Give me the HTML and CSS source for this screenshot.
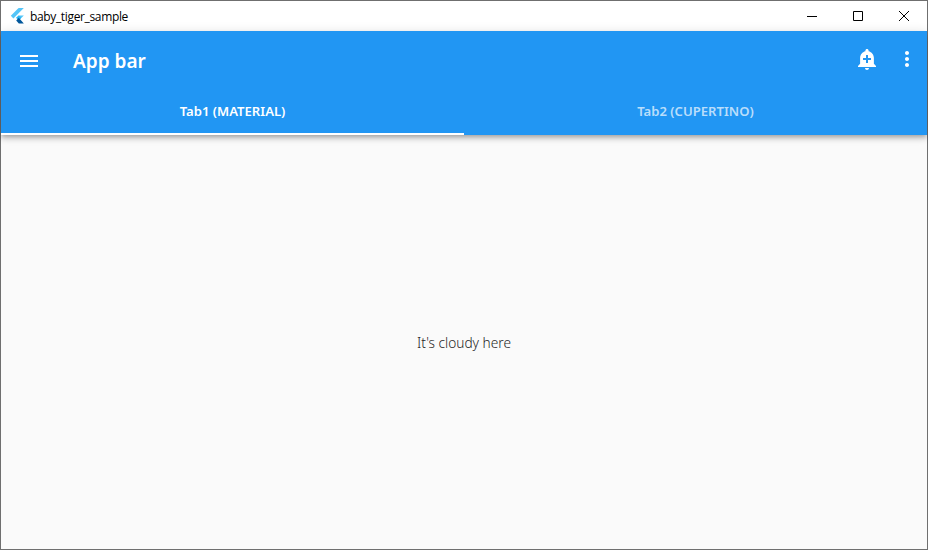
FILE: index.html
```html
<!DOCTYPE html>
<html lang="en">
<head>
    <meta charset="UTF-8">
    <title>baby_tiger_sample</title>
    <link rel="stylesheet" href="styles.css">
</head>
<body>
    <div class="window">
        <div class="titlebar">
            <svg class="flutter-logo" viewBox="0 0 14 16" width="14" height="16">
                <polygon points="8.6,0 13.8,0 3.4,10.4 0.8,7.8" fill="#54c5f8"/>
                <polygon points="8.6,7.4 13.8,7.4 8.8,12.4 6.2,9.8" fill="#54c5f8"/>
                <polygon points="6.2,9.8 8.8,7.4 11.2,9.8 8.8,12.4" fill="#29b6f6"/>
                <polygon points="6.2,12.4 8.8,9.8 13.8,15.6 8.8,15.6" fill="#01579b"/>
            </svg>
            <span class="window-title">baby_tiger_sample</span>
            <div class="window-controls">
                <div class="win-btn">
                    <svg viewBox="0 0 10 10" width="10" height="10"><path d="M0 5.5h10" stroke="#000" fill="none"/></svg>
                </div>
                <div class="win-btn">
                    <svg viewBox="0 0 10 10" width="10" height="10"><path d="M.5.5h9v9h-9z" stroke="#000" fill="none"/></svg>
                </div>
                <div class="win-btn">
                    <svg viewBox="0 0 10 10" width="10" height="10"><path d="M0 0l10 10M10 0L0 10" stroke="#000" fill="none"/></svg>
                </div>
            </div>
        </div>

        <header class="appbar">
            <div class="toolbar">
                <svg class="icon menu-icon" viewBox="0 0 24 24"><path d="M3 18h18v-2H3v2zm0-5h18v-2H3v2zm0-7v2h18V6H3z"/></svg>
                <h1 class="appbar-title">App bar</h1>
                <svg class="icon bell-icon" viewBox="0 0 24 24"><path d="M10.01 21.01c0 1.1.89 1.99 1.99 1.99s1.99-.89 1.99-1.99h-3.98zm8.87-4.19V11c0-3.25-2.25-5.97-5.28-6.69v-.72C13.6 2.71 12.89 2 12 2s-1.6.71-1.6 1.59v.72C7.37 5.03 5.12 7.75 5.12 11v5.82L3 18.94V20h18v-1.06l-2.12-2.12zM16 13.01h-3v3h-2v-3H8V11h3V8h2v3h3v2.01z"/></svg>
                <svg class="icon more-icon" viewBox="0 0 24 24"><path d="M12 8c1.1 0 2-.9 2-2s-.9-2-2-2-2 .9-2 2 .9 2 2 2zm0 2c-1.1 0-2 .9-2 2s.9 2 2 2 2-.9 2-2-.9-2-2-2zm0 6c-1.1 0-2 .9-2 2s.9 2 2 2 2-.9 2-2-.9-2-2-2z"/></svg>
            </div>
            <div class="tabs">
                <div class="tab active">Tab1 (MATERIAL)</div>
                <div class="tab">Tab2 (CUPERTINO)</div>
            </div>
        </header>

        <main class="content">
            <p class="message">It's cloudy here</p>
        </main>
    </div>
</body>
</html>
```

FILE: styles.css
```css
/* General Styles */
html, body {
    margin: 0;
    height: 100%;
}

body {
    font-family: 'Noto Sans', sans-serif;
    overflow: hidden;
}

.window {
    box-sizing: border-box;
    display: flex;
    flex-direction: column;
    width: 928px;
    height: 550px;
    border: 1px solid #6f6f6f;
    background-color: #fafafa;
}

/* Title Bar */
.titlebar {
    display: flex;
    align-items: center;
    height: 30px;
    flex-shrink: 0;
    background-color: #fff;
    padding-left: 9px;
}

.flutter-logo {
    margin-right: 6px;
    margin-top: -1px;
}

.window-title {
    font-family: 'Open Sans', sans-serif;
    font-size: 12px;
    letter-spacing: -0.35px;
    color: #000;
}

.window-controls {
    display: flex;
    margin-left: auto;
    height: 100%;
}

.win-btn {
    display: flex;
    align-items: center;
    justify-content: center;
    width: 46px;
}

/* App Bar */
.appbar {
    flex-shrink: 0;
    background-color: #2196f3;
    color: #fff;
    box-shadow: 0 2px 4px -1px rgba(0, 0, 0, 0.2), 0 4px 5px rgba(0, 0, 0, 0.14), 0 1px 10px rgba(0, 0, 0, 0.12);
    position: relative;
}

.toolbar {
    display: flex;
    align-items: center;
    height: 60px;
    padding: 0 8px 0 16px;
}

.icon {
    width: 24px;
    height: 24px;
    fill: #fff;
}

.appbar-title {
    flex: 1;
    margin: 0 0 0 32px;
    font-size: 19px;
    font-weight: 600;
}

.bell-icon {
    margin-right: 16px;
    margin-top: -4px;
}

.more-icon {
    margin-top: -4px;
}

/* Tabs */
.tabs {
    display: flex;
    height: 44px;
}

.tab {
    flex: 1;
    box-sizing: border-box;
    display: flex;
    align-items: center;
    justify-content: center;
    padding-bottom: 2px;
    font-size: 13.1px;
    font-weight: 600;
    border-bottom: 2px solid transparent;
    color: rgba(255, 255, 255, 0.7);
}

.tab.active {
    color: #fff;
    border-bottom-color: #fff;
}

/* Content */
.content {
    flex: 1;
    display: flex;
    align-items: center;
    justify-content: center;
}

.message {
    margin: 0;
    font-size: 13.7px;
    color: #1f1f1f;
    font-weight: 300;
}
```
